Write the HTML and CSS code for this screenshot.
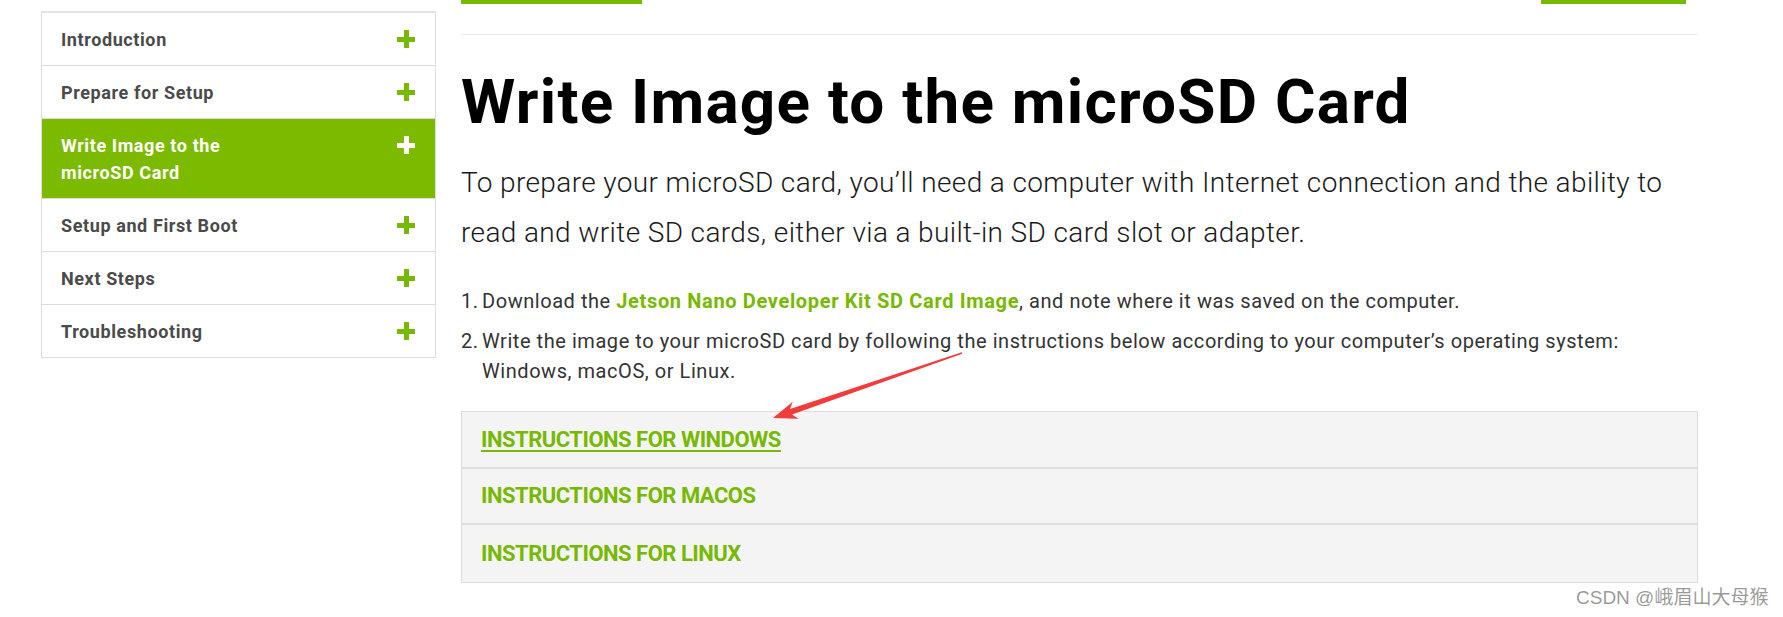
FILE: index.html
```html
<!DOCTYPE html>
<html lang="en">
<head>
<meta charset="utf-8">
<title>Write Image to the microSD Card</title>
<link rel="stylesheet" href="styles.css">
</head>
<body>
<div class="page">
  <nav class="sidebar">
    <div class="nav-item"><span class="nav-label">Introduction</span><span class="plus"></span></div>
    <div class="nav-item"><span class="nav-label">Prepare for Setup</span><span class="plus"></span></div>
    <div class="nav-item active"><span class="nav-label">Write Image to the microSD Card</span><span class="plus"></span></div>
    <div class="nav-item"><span class="nav-label">Setup and First Boot</span><span class="plus"></span></div>
    <div class="nav-item"><span class="nav-label">Next Steps</span><span class="plus"></span></div>
    <div class="nav-item"><span class="nav-label">Troubleshooting</span><span class="plus"></span></div>
  </nav>
  <main class="content">
    <div class="tabbars"><span class="bar bar-left"></span><span class="bar bar-right"></span></div>
    <hr class="sep">
    <h1 class="title">Write Image to the microSD Card</h1>
    <p class="lead">To prepare your microSD card, you’ll need a computer with Internet connection and the ability to read and write SD cards, either via a built-in SD card slot or adapter.</p>
    <ol class="steps">
      <li><span class="step-text">Download the <a class="link" href="#">Jetson Nano Developer Kit SD Card Image</a>, and note where it was saved on the computer.</span></li>
      <li><span class="step-text">Write the image to your microSD card by following the instructions below according to your computer’s operating system: Windows, macOS, or Linux.</span></li>
    </ol>
    <div class="accordion">
      <div class="acc-item"><a class="acc-link underline" href="#">INSTRUCTIONS FOR WINDOWS</a></div>
      <div class="acc-item"><a class="acc-link" href="#">INSTRUCTIONS FOR MACOS</a></div>
      <div class="acc-item"><a class="acc-link" href="#">INSTRUCTIONS FOR LINUX</a></div>
    </div>
  </main>
</div>
<svg class="arrow" width="1783" height="617" viewBox="0 0 1783 617" aria-hidden="true">
  <polygon fill="#f23b3b" points="773,418 798.6,418.7 792,414.6 962.2,353.7 961.8,352.3 790,409 792.8,401.7"/>
</svg>
<div class="watermark">CSDN @峨眉山大母猴</div>
</body>
</html>
```
FILE: styles.css
```css
* { box-sizing: border-box; }
html, body { margin: 0; padding: 0; background: #fff; }
body {
  width: 1783px;
  height: 617px;
  overflow: hidden;
  position: relative;
  font-family: Roboto, "Liberation Sans", sans-serif;
  color: #1a1a1a;
}
.page {
  display: flex;
  align-items: flex-start;
  padding-left: 41px;
}
.sidebar {
  width: 395px;
  margin-top: 11px;
  border: 1px solid #dedede;
  border-top: 2px solid #e4e4e4;
  flex-shrink: 0;
}
.nav-item {
  display: flex;
  justify-content: space-between;
  align-items: flex-start;
  padding: 13px 20px 12px 19px;
  border-bottom: 1px solid #dcdcdc;
  font-weight: 700;
  font-size: 18px;
  letter-spacing: 0.6px;
  line-height: 27px;
  color: #4a4a4a;
}
.nav-item:last-child { border-bottom: 0; }
.nav-label { max-width: 205px; }
.nav-item.active {
  background: #7cba00;
  color: #fff;
  padding-bottom: 12px;
}
.plus {
  width: 18px;
  height: 18px;
  margin-top: 4px;
  flex-shrink: 0;
  background:
    linear-gradient(#76b900, #76b900) center / 18px 5px no-repeat,
    linear-gradient(#76b900, #76b900) center / 5px 18px no-repeat;
}
.active .plus {
  background:
    linear-gradient(#fff, #fff) center / 18px 5px no-repeat,
    linear-gradient(#fff, #fff) center / 5px 18px no-repeat;
}
.content {
  margin-left: 25px;
  width: 1237px;
}
.tabbars {
  display: flex;
  justify-content: space-between;
  padding-right: 12px;
  height: 4px;
}
.bar { display: block; height: 4px; background: #76b900; }
.bar-left { width: 181px; }
.bar-right { width: 145px; }
.sep {
  margin: 30px 0 0;
  border: 0;
  border-top: 1px solid #ececec;
  height: 0;
}
.title {
  margin: 31px 0 0;
  font-size: 62px;
  line-height: 72px;
  font-weight: 700;
  color: #000;
  letter-spacing: 1.25px;
}
.lead {
  margin: 20px 0 0;
  font-size: 28px;
  line-height: 50px;
  font-weight: 300;
  letter-spacing: 0.38px;
  color: #1a1a1a;
}
.steps {
  list-style: none;
  counter-reset: step;
  margin: 28px 0 0;
  padding: 0 30px 0 0;
  display: flex;
  flex-direction: column;
  gap: 10px;
  font-size: 20px;
  line-height: 30px;
  letter-spacing: 0.55px;
  color: #333;
}
.steps li {
  counter-increment: step;
  display: flex;
}
.steps li::before {
  content: counter(step) ".";
  width: 21px;
  letter-spacing: 0.5px;
  flex-shrink: 0;
}
.link {
  color: #76b900;
  font-weight: 700;
  letter-spacing: 0.65px;
  text-decoration: none;
}
.accordion {
  margin-top: 25px;
  border: 1px solid #dcdcdc;
  background: #f4f4f4;
}
.acc-item {
  height: 56.5px;
  display: flex;
  align-items: center;
  padding-left: 19px;
  border-bottom: 2px solid #dddddd;
}
.acc-item:last-child { border-bottom: 0; }
.acc-link {
  color: #76b900;
  font-weight: 700;
  font-size: 22px;
  letter-spacing: -0.5px;
  text-decoration: none;
}
.acc-link.underline {
  text-decoration: underline;
  text-decoration-thickness: 2px;
  text-underline-offset: 3px;
}
.arrow {
  position: absolute;
  left: 0;
  top: 0;
  pointer-events: none;
}
.watermark {
  position: absolute;
  left: 1576px;
  top: 587px;
  font-family: "Liberation Sans", "Noto Sans CJK SC", sans-serif;
  font-size: 19px;
  line-height: 22px;
  color: rgba(120, 120, 120, 0.75);
  white-space: nowrap;
}
```
